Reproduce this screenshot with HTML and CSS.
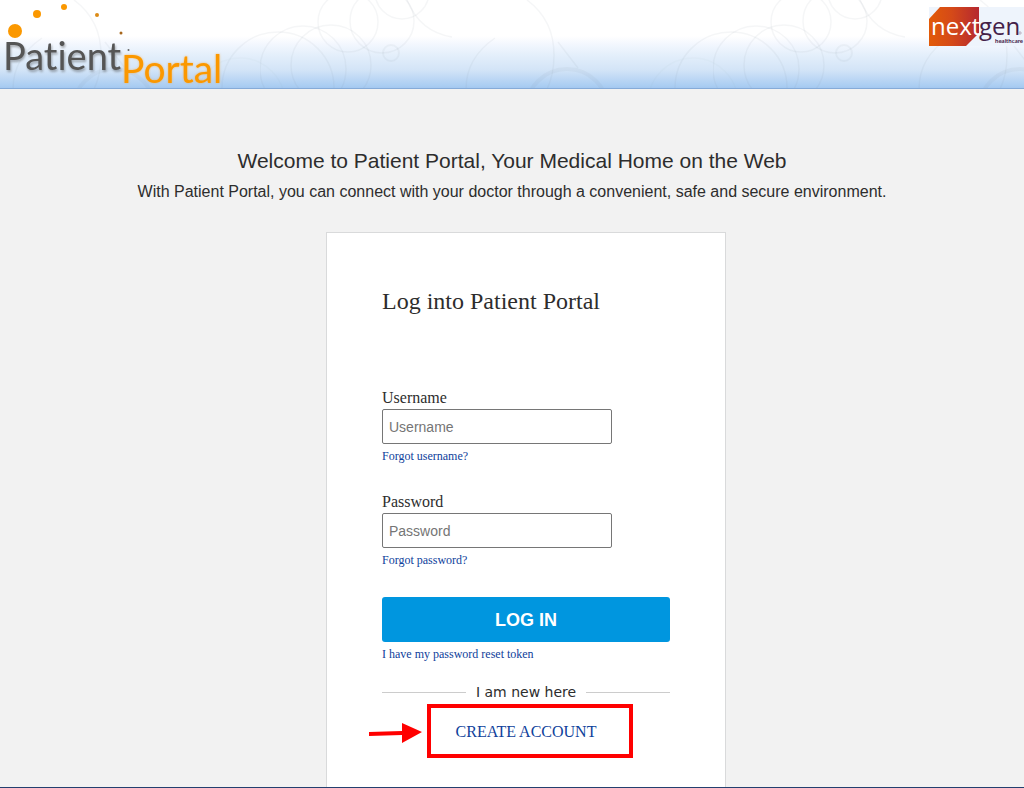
FILE: index.html
```html
<!DOCTYPE html>
<html lang="en">
<head>
<meta charset="utf-8">
<meta name="viewport" content="width=device-width, initial-scale=1">
<title>Patient Portal</title>
<link rel="stylesheet" href="styles.css">
</head>
<body>
<header class="banner">
  <svg class="banner-art" aria-hidden="true">
    <defs>
      <pattern id="rings" x="260" y="0" width="453" height="89" patternUnits="userSpaceOnUse">
        <g fill="none" stroke="#707a90" stroke-opacity=".07" stroke-width="1.5">
          <circle cx="18" cy="88" r="56"/>
          <circle cx="471" cy="88" r="56"/>
          <circle cx="71" cy="65" r="40"/>
          <circle cx="43" cy="69" r="43"/>
          <circle cx="88" cy="22" r="30"/>
          <circle cx="122" cy="21" r="32"/>
          <circle cx="142" cy="-8" r="27"/>
          <circle cx="131" cy="53" r="8" stroke-width="2"/>
          <path d="M147 0Q160 32 192 37"/>
          <path d="M267 0Q294 20 294 55Q294 75 287 89"/>
          <path d="M206 89Q206 58 235 38M298 42L318 68"/>
          <circle cx="307" cy="110" r="41" stroke-width="4"/>
          <circle cx="433" cy="103" r="45" stroke-opacity=".03"/>
          <circle cx="-20" cy="103" r="45" stroke-opacity=".03"/>
        </g>
      </pattern>
    </defs>
    <rect width="100%" height="100%" fill="url(#rings)"/>
  </svg>
  <svg class="portal-logo" viewBox="0 0 230 88" role="img" aria-label="Patient Portal">
    <g fill="#fb9800">
      <circle cx="15" cy="31" r="7"/>
      <circle cx="37" cy="14" r="4"/>
      <circle cx="64" cy="7" r="3"/>
      <circle cx="97" cy="15" r="2" fill="#dc8b16"/>
      <circle cx="121" cy="33" r="1.5" fill="#a7661c"/>
      <circle cx="128.500" cy="50" r="1" fill="#666"/>
    </g>
    <text class="logo-patient" x="3" y="70">Patient</text>
    <text class="logo-portal" x="121" y="83">Portal</text>
  </svg>
  <svg class="vendor-logo" viewBox="0 0 95 39" role="img" aria-label="NextGen Healthcare">
    <defs>
      <linearGradient id="ember"><stop offset="0" stop-color="#e25b08"/><stop offset=".45" stop-color="#d54a18"/><stop offset="1" stop-color="#b52830"/></linearGradient>
    </defs>
    <rect width="95" height="39" fill="#eef4fc"/>
    <path d="M11 0H50V26L37 39H0V12Z" fill="url(#ember)"/>
    <text class="vendor-next" x="2" y="28">next</text>
    <text class="vendor-gen" x="50" y="28">gen</text>
    <text class="vendor-sub" x="66" y="36">healthcare</text>
    <circle cx="91" cy="26" r="1.200" fill="none" stroke="#98859c" stroke-width=".6"/>
  </svg>
</header>
<main class="page">
  <h1 class="welcome">Welcome to Patient Portal, Your Medical Home on the Web</h1>
  <p class="intro">With Patient Portal, you can connect with your doctor through a convenient, safe and secure environment.</p>
  <div class="card-row">
    <form class="card">
      <h2 class="card-title">Log into Patient Portal</h2>
      <div class="field">
        <label for="username">Username</label>
        <input id="username" type="text" placeholder="Username">
        <a class="help" href="#">Forgot username?</a>
      </div>
      <div class="field">
        <label for="password">Password</label>
        <input id="password" type="password" placeholder="Password">
        <a class="help" href="#">Forgot password?</a>
      </div>
      <button class="login" type="submit">LOG IN</button>
      <a class="help" href="#">I have my password reset token</a>
      <div class="divider"><span>I am new here</span></div>
      <div class="create-row">
        <div class="create-spot">
          <a class="create" href="#">CREATE ACCOUNT</a>
          <span class="marker"></span>
          <svg class="arrow" viewBox="0 0 53 20" aria-hidden="true"><path d="M0 13V9L33 8V0L53 9L33 20V12Z" fill="#f00"/></svg>
        </div>
      </div>
    </form>
  </div>
</main>
</body>
</html>
```
FILE: styles.css
```css
* { box-sizing: border-box; }

body {
  margin: 0;
  min-height: 100vh;
  display: flex;
  flex-direction: column;
  background: #f2f2f2;
  border-bottom: 1px solid #24406f;
  color: #2d2d2d;
  font-family: "Liberation Sans", Arial, sans-serif;
}

.banner {
  position: relative;
  display: flex;
  justify-content: space-between;
  height: 89px;
  border-bottom: 1px solid #86abd8;
  background: linear-gradient(#fff 0, #fff 36px, #f3f7fe 44px, #e4effb 55px, #d3e4f7 70px, #aacdf2 86px, #a4c8ef 88px);
}

.banner-art {
  position: absolute;
  inset: 0;
  width: 100%;
  height: 100%;
}

.portal-logo {
  position: relative;
  width: 230px;
  height: 88px;
  overflow: visible;
}

.portal-logo text {
  font-family: Lato, sans-serif;
  font-variant-ligatures: none;
}

.portal-logo .logo-patient {
  fill: #555;
  font-size: 38px;
  filter: drop-shadow(1px 2px 1px rgba(60, 60, 60, .4));
}

.portal-logo .logo-portal {
  fill: #fb9800;
  font-size: 39px;
  filter: drop-shadow(0 0 1px rgba(251, 170, 60, .7));
}

.vendor-logo {
  position: relative;
  width: 95px;
  height: 39px;
  margin-top: 7px;
}

.vendor-logo text {
  font-family: "Open Sans", sans-serif;
}

.vendor-logo .vendor-next,
.vendor-logo .vendor-gen {
  font-size: 24px;
  font-weight: 500;
}

.vendor-next { fill: #fff; }
.vendor-gen { fill: #432048; }

.vendor-logo .vendor-sub {
  fill: #432048;
  font-family: Lato, sans-serif;
  font-size: 6px;
  font-weight: 700;
}

.page {
  flex: 1;
  display: flex;
  flex-direction: column;
  padding-top: 58px;
}

.welcome {
  margin: 0;
  padding: 0 16px;
  font-size: 21px;
  font-weight: 400;
  line-height: 28px;
  text-align: center;
}

.intro {
  margin: 7px 0 30px;
  padding: 0 16px;
  font-size: 16px;
  line-height: 20px;
  text-align: center;
}

.card-row {
  flex: 1;
  display: flex;
  justify-content: center;
  padding-left: 28px;
}

.card {
  width: 100%;
  max-width: 400px;
  padding: 54px 55px 28px;
  border: 1px solid #d9dadb;
  border-bottom: 0;
  background: #fff;
  font-family: "Liberation Serif", "Times New Roman", serif;
}

.card-title {
  margin: 0 0 72px;
  font-size: 24px;
  font-weight: 400;
  line-height: 28px;
}

.field {
  margin-bottom: 27px;
}

.field label {
  display: block;
  font-size: 16px;
  line-height: 22px;
}

.field input {
  display: block;
  width: 80%;
  height: 35px;
  padding: 0 6px;
  border: 1px solid #767676;
  border-radius: 2px;
  background: #fff;
  font-family: "Liberation Sans", Arial, sans-serif;
  font-size: 14px;
}

.field input::placeholder {
  color: #757575;
}

.help {
  display: block;
  margin-top: 4px;
  color: #0e419b;
  font-size: 12px;
  line-height: 16px;
  text-decoration: none;
}

.login {
  display: block;
  width: 100%;
  height: 45px;
  margin-top: 29px;
  padding: 2px 6px 0;
  border: 0;
  border-radius: 3px;
  background: #0096df;
  color: #fff;
  font-family: "Liberation Sans", Arial, sans-serif;
  font-size: 18px;
  font-weight: 700;
}

.divider {
  display: flex;
  align-items: center;
  gap: 10px;
  margin: 20px 0 2px;
  font-family: "DejaVu Sans", Verdana, sans-serif;
  font-size: 14px;
  line-height: 20px;
}

.divider::before,
.divider::after {
  content: "";
  flex: 1;
  height: 1px;
  background: #ccc;
}

.create-row {
  display: flex;
  justify-content: center;
}

.create-spot {
  position: relative;
}

.create {
  display: block;
  padding-top: 2px;
  color: #0e419b;
  font-size: 16px;
  line-height: 52px;
  text-decoration: none;
}

.marker {
  position: absolute;
  inset: 0 -37px 0 -29px;
  border: 4px solid #f00;
  pointer-events: none;
}

.arrow {
  position: absolute;
  right: calc(100% + 34px);
  top: 19px;
  width: 53px;
  height: 20px;
}
```
